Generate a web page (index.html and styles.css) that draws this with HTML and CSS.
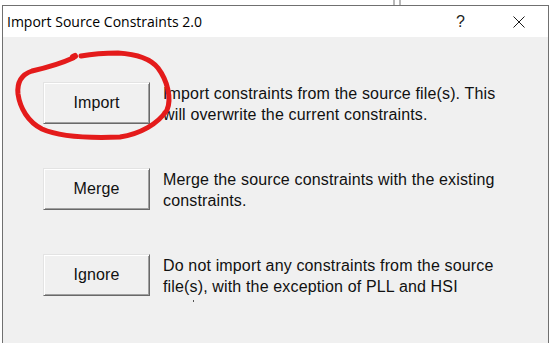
FILE: index.html
```html
<!DOCTYPE html>
<html>
<head>
<meta charset="utf-8">
<link rel="stylesheet" href="styles.css">
</head>
<body>
<div class="bgmark"></div>
<div class="window">
  <div class="titlebar">
    <span class="title">Import Source Constraints 2.0</span>
    <span class="help">?</span>
    <svg class="close" width="12" height="12" viewBox="0 0 12 12"><path d="M0.5 0.5 L11.5 11.5 M11.5 0.5 L0.5 11.5" stroke="#1a1a1a" stroke-width="1" fill="none"/></svg>
  </div>
  <div class="content">
    <div class="row">
      <button class="btn">Import</button>
      <p class="desc">Import constraints from the source file(s). This<br>will overwrite the current constraints.</p>
    </div>
    <div class="row">
      <button class="btn">Merge</button>
      <p class="desc">Merge the source constraints with the existing<br>constraints.</p>
    </div>
    <div class="row">
      <button class="btn">Ignore</button>
      <p class="desc">Do not import any constraints from the source<br>file(s), with the exception of PLL and HSI<span class="clipdot"></span></p>
    </div>
  </div>
</div>
<svg class="scribble" width="549" height="343" viewBox="0 0 549 343">
  <path d="M73 57 L75 56" stroke="#e41b1b" stroke-width="6" stroke-linecap="round" fill="none"/>
  <path d="M73 58 C60 64 45 68 32 71 C20 75 17 84 18 94 C20 108 28 122 42 129 C60 137 95 138 120 137 C140 134 158 124 167 110 C172 98 167 80 158 68 C150 58 135 54 118 53 C105 53 92 54 81 56" stroke="#e41b1b" stroke-width="5" stroke-linecap="round" fill="none"/>
</svg>
</body>
</html>
```
FILE: styles.css
```css
html, body {
  margin: 0;
  padding: 0;
  background: #ffffff;
  width: 549px;
  height: 343px;
  overflow: hidden;
}
.bgmark {
  position: absolute;
  left: 393px;
  top: 0;
  width: 8px;
  height: 5px;
  border-left: 2px solid #b8b8b8;
  border-right: 2px solid #b8b8b8;
  box-sizing: border-box;
}
.window {
  margin: 5px 0 0 2px;
  width: 547px;
  height: 338px;
  border: 1px solid #707070;
  border-bottom: none;
  box-sizing: border-box;
  background: #f0f0f0;
}
.titlebar {
  height: 31px;
  background: #ffffff;
  display: flex;
  align-items: center;
  font-family: "Open Sans", "Noto Sans", sans-serif;
  font-size: 14px;
  color: #000;
}
.title {
  margin-left: 4px;
  flex: 1;
}
.help {
  font-family: "Liberation Sans", Arial, sans-serif;
  font-size: 16px;
  width: 9px;
  margin-right: 48px;
  color: #222;
}
.close {
  margin-right: 23px;
}
.content {
  padding: 45px 0 0 40px;
  display: flex;
  flex-direction: column;
  gap: 43px;
}
.row {
  display: flex;
  align-items: flex-start;
  gap: 13px;
}
.btn {
  width: 107px;
  height: 42px;
  flex: none;
  background: #f0f0f0;
  border: 1px solid;
  border-color: #e3e3e3 #696969 #696969 #e3e3e3;
  box-shadow: inset 1px 1px #ffffff, inset -1px -1px #a0a0a0;
  font-family: "Liberation Sans", Arial, sans-serif;
  font-size: 16px;
  letter-spacing: 0.1px;
  color: #111;
  padding: 0;
  margin: 0;
}
.desc {
  margin: 1px 0 0 0;
  font-family: "Liberation Sans", Arial, sans-serif;
  font-size: 16px;
  letter-spacing: 0.15px;
  line-height: 21px;
  color: #111;
  position: relative;
}
.clipdot {
  position: absolute;
  left: 30px;
  top: 45px;
  width: 1px;
  height: 2px;
  background: #555;
}
.scribble {
  position: absolute;
  left: 0;
  top: 0;
  pointer-events: none;
}
```
